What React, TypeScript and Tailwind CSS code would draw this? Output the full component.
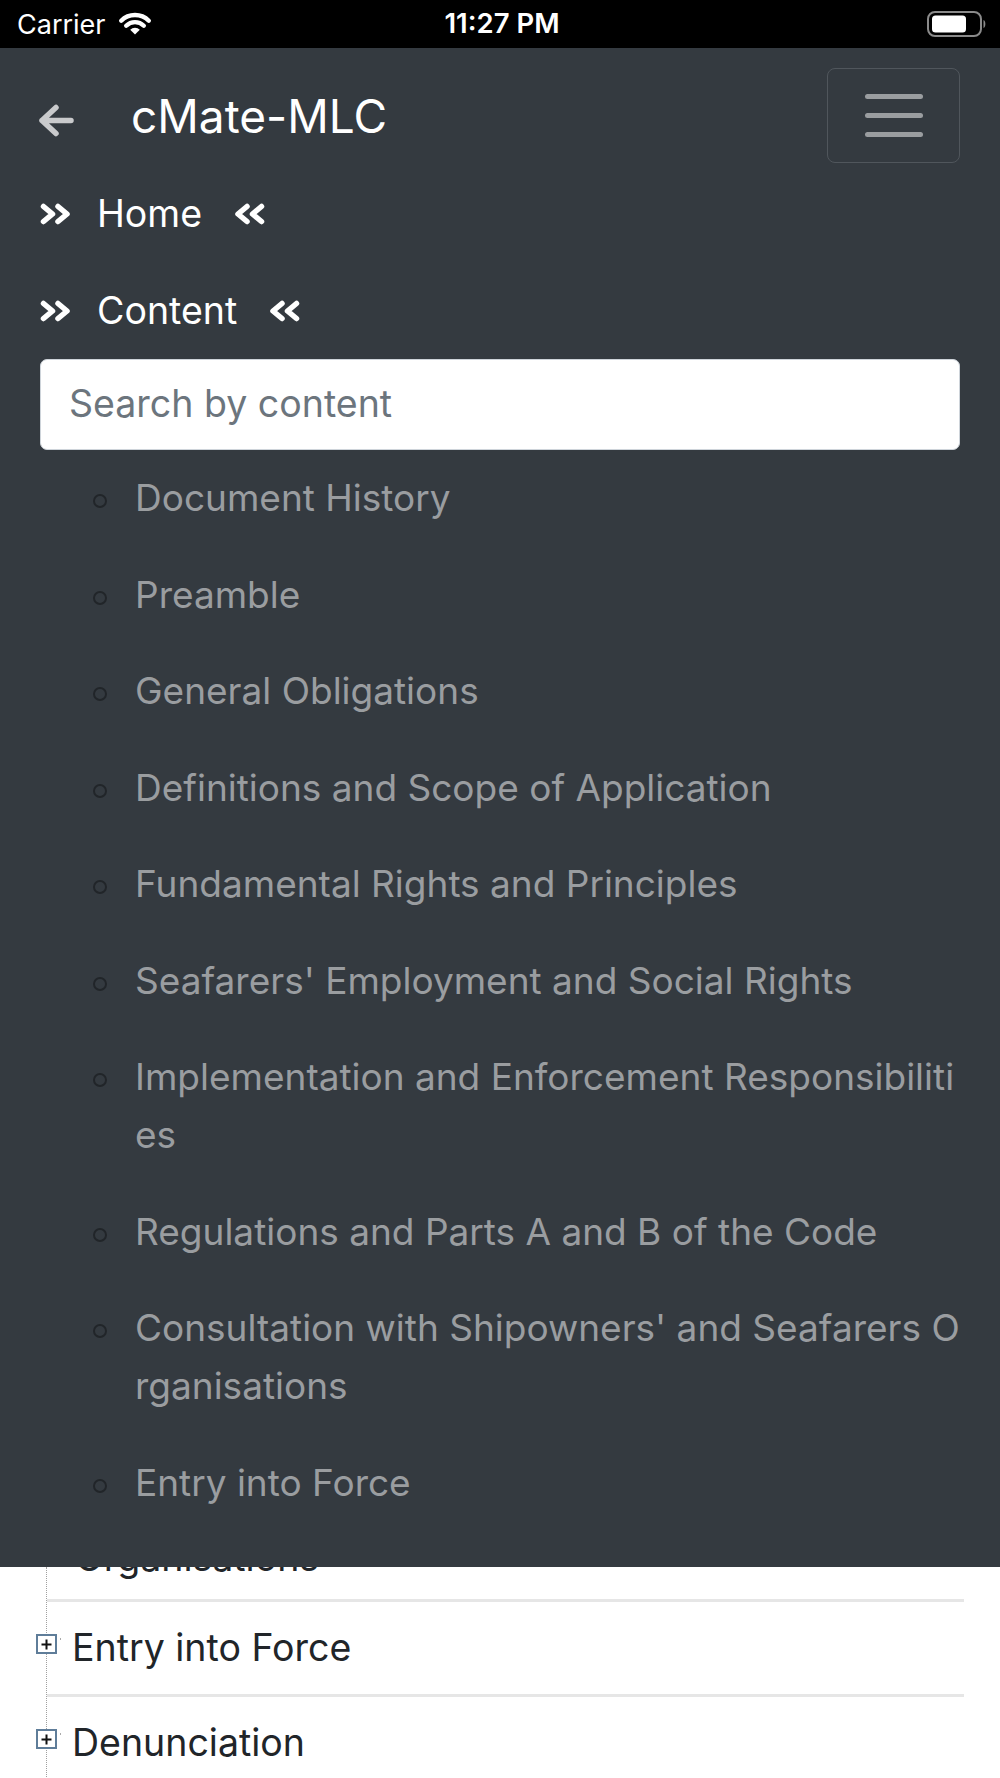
import React from 'react';

// Table of contents shown in the open navbar menu
const contents: string[][] = [
  ['Document History'],
  ['Preamble'],
  ['General Obligations'],
  ['Definitions and Scope of Application'],
  ['Fundamental Rights and Principles'],
  ["Seafarers' Employment and Social Rights"],
  ['Implementation and Enforcement Responsibiliti', 'es'],
  ['Regulations and Parts A and B of the Code'],
  ["Consultation with Shipowners' and Seafarers O", 'rganisations'],
  ['Entry into Force'],
];

function Wifi() {
  return (
    <svg width="34" height="24" viewBox="0 0 34 24" fill="none">
      <path d="M3.2 9.7 A19.5 19.5 0 0 1 30.8 9.7" stroke="white" strokeWidth="4.4" strokeLinecap="round" />
      <path d="M8.2 14.7 A12.5 12.5 0 0 1 25.8 14.7" stroke="white" strokeWidth="4.4" strokeLinecap="round" />
      <path d="M17 23.5 L12.2 18.7 A6.8 6.8 0 0 1 21.8 18.7 Z" fill="white" />
    </svg>
  );
}

function Battery() {
  return (
    <svg width="60" height="27" viewBox="0 0 60 27" fill="none">
      <rect x="1" y="1" width="53" height="24" rx="7" stroke="#8a8a8a" strokeWidth="2" />
      <rect x="5" y="4.5" width="34" height="17" rx="3.5" fill="white" />
      <path d="M56.5 9 C59 10 59 16 56.5 17 Z" fill="#8a8a8a" />
    </svg>
  );
}

function BackArrow() {
  return (
    <svg width="36" height="33" viewBox="0 0 36 33" fill="none">
      <path d="M18 3.5 L4 16.5 L18 29.5 M4 16.5 H33" stroke="#c9cacc" strokeWidth="5.5" strokeLinecap="round" strokeLinejoin="round" />
    </svg>
  );
}

function DoubleRight() {
  return (
    <svg width="31" height="22" viewBox="0 0 31 22" fill="none">
      <path d="M3.5 3.5 L12.5 11 L3.5 18.5 M18 3.5 L27 11 L18 18.5" stroke="white" strokeWidth="5.5" strokeLinecap="round" strokeLinejoin="round" />
    </svg>
  );
}

function DoubleLeft() {
  return (
    <svg width="31" height="22" viewBox="0 0 31 22" fill="none">
      <path d="M27.5 3.5 L18.5 11 L27.5 18.5 M13 3.5 L4 11 L13 18.5" stroke="white" strokeWidth="5.5" strokeLinecap="round" strokeLinejoin="round" />
    </svg>
  );
}

function NavLink({ label }: { label: string }) {
  return (
    <div className="flex h-[97px] items-center pl-[40px] text-[37.5px] leading-[58px] text-white">
      <DoubleRight />
      <span className="ml-[26px]">{label}</span>
      <span className="ml-[32px] flex">
        <DoubleLeft />
      </span>
    </div>
  );
}

function TreeRow({ label, last }: { label: string; last?: boolean }) {
  return (
    <div className={`flex items-start pt-[17px] pb-[17px] ${last ? '' : 'border-b-[3px] border-[#e6e6e6]'}`}>
      <span className="-ml-[11.5px] mt-[15px] flex h-[20px] w-[21px] shrink-0 items-center justify-center border-2 border-[#5f7d99] bg-white">
        <svg width="11" height="11" viewBox="0 0 11 11">
          <path d="M5.5 0.5 V10.5 M0.5 5.5 H10.5" stroke="#111" strokeWidth="2" />
        </svg>
      </span>
      <span className="ml-[3px] mt-[19px] h-[1.5px] w-[1.5px] bg-[#aaa]"></span>
      <span className="ml-[11px] text-[37.5px] leading-[58px] text-[#212529]">{label}</span>
    </div>
  );
}

export default function App() {
  return (
    <div className="h-[1778px] w-[1000px] overflow-hidden bg-white font-['Inter','Liberation_Sans',sans-serif]">
      {/* status bar */}
      <div className="flex h-[48px] items-center bg-black pl-[17px] pr-[13px] text-white">
        <div className="flex w-[330px] items-center">
          <span className="text-[27px] leading-none">Carrier</span>
          <span className="ml-[12px] -mt-[2px] flex">
            <Wifi />
          </span>
        </div>
        <div className="flex-1 text-center text-[27.5px] font-semibold leading-none">11:27 PM</div>
        <div className="flex w-[330px] justify-end">
          <Battery />
        </div>
      </div>

      {/* dark navbar with open menu */}
      <div className="bg-[#343a40] pb-[36px]">
        <div className="flex items-center justify-between pl-[38px] pr-[40px] pt-[20px]">
          <div className="flex items-center">
            <span className="mt-[10px] flex">
              <BackArrow />
            </span>
            <span className="ml-[57px] text-[46px] leading-none text-white">cMate-MLC</span>
          </div>
          <button className="flex h-[95px] w-[133px] flex-col items-center justify-center gap-[14.5px] rounded-[8px] border-[1.5px] border-[#50565c]">
            <span className="h-[4.5px] w-[58px] rounded-full bg-[#9a9da0]"></span>
            <span className="h-[4.5px] w-[58px] rounded-full bg-[#9a9da0]"></span>
            <span className="h-[4.5px] w-[58px] rounded-full bg-[#9a9da0]"></span>
          </button>
        </div>

        <div className="mt-[2px]">
          <NavLink label="Home" />
          <NavLink label="Content" />
        </div>

        <div className="mx-[40px] flex h-[91px] items-center rounded-[7px] border-[1.5px] border-[#ced4da] bg-white pl-[28px]">
          <input
            type="text"
            placeholder="Search by content"
            className="w-full bg-transparent text-[37.5px] text-[#495057] outline-none placeholder:text-[#6c757d]"
          />
        </div>

        <ul>
          {contents.map((lines) => (
            <li key={lines.join('')} className="flex py-[19.25px] pl-[93px]">
              <span className="flex h-[58px] items-center">
                <span className="mt-[6px] h-[14px] w-[14px] rounded-full border-[2.5px] border-[#212529]"></span>
              </span>
              <span className="ml-[28px] whitespace-nowrap text-[37px] leading-[58px] text-[#9a9da0]">
                {lines.map((line) => (
                  <span key={line} className="block">
                    {line}
                  </span>
                ))}
              </span>
            </li>
          ))}
        </ul>
      </div>

      {/* page content under the menu */}
      <div className="ml-[46px] mr-[36px] border-l-[1.5px] border-dotted border-[#a0a0a0]">
        <div className="h-[35px] overflow-hidden border-b-[3px] border-[#e6e6e6]">
          <div className="-mt-[38px] pl-[28px] text-[37.5px] leading-[58px] text-[#212529]">Organisations</div>
        </div>
        <TreeRow label="Entry into Force" />
        <TreeRow label="Denunciation" last />
      </div>
    </div>
  );
}
